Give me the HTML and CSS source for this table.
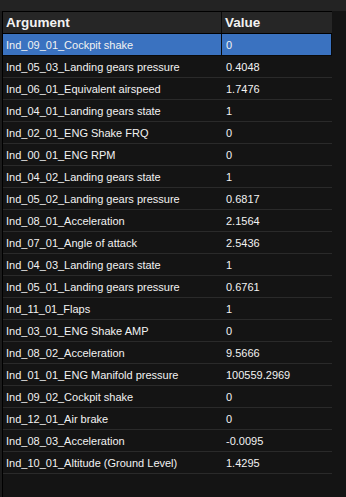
FILE: index.html
```html
<!DOCTYPE html>
<html>
<head>
<meta charset="utf-8">
<link rel="stylesheet" href="styles.css">
</head>
<body>
<div class="top"></div>
<div class="frame">
  <div class="side"></div>
  <div class="grid">
    <div class="row head"><div class="c1">Argument</div><div class="c2">Value</div></div>
    <div class="row sel"><div class="c1">Ind_09_01_Cockpit shake</div><div class="c2">0</div></div>
    <div class="row"><div class="c1">Ind_05_03_Landing gears pressure</div><div class="c2">0.4048</div></div>
    <div class="row"><div class="c1">Ind_06_01_Equivalent airspeed</div><div class="c2">1.7476</div></div>
    <div class="row"><div class="c1">Ind_04_01_Landing gears state</div><div class="c2">1</div></div>
    <div class="row"><div class="c1">Ind_02_01_ENG Shake FRQ</div><div class="c2">0</div></div>
    <div class="row"><div class="c1">Ind_00_01_ENG RPM</div><div class="c2">0</div></div>
    <div class="row"><div class="c1">Ind_04_02_Landing gears state</div><div class="c2">1</div></div>
    <div class="row"><div class="c1">Ind_05_02_Landing gears pressure</div><div class="c2">0.6817</div></div>
    <div class="row"><div class="c1">Ind_08_01_Acceleration</div><div class="c2">2.1564</div></div>
    <div class="row"><div class="c1">Ind_07_01_Angle of attack</div><div class="c2">2.5436</div></div>
    <div class="row"><div class="c1">Ind_04_03_Landing gears state</div><div class="c2">1</div></div>
    <div class="row"><div class="c1">Ind_05_01_Landing gears pressure</div><div class="c2">0.6761</div></div>
    <div class="row"><div class="c1">Ind_11_01_Flaps</div><div class="c2">1</div></div>
    <div class="row"><div class="c1">Ind_03_01_ENG Shake AMP</div><div class="c2">0</div></div>
    <div class="row"><div class="c1">Ind_08_02_Acceleration</div><div class="c2">9.5666</div></div>
    <div class="row"><div class="c1">Ind_01_01_ENG Manifold pressure</div><div class="c2">100559.2969</div></div>
    <div class="row"><div class="c1">Ind_09_02_Cockpit shake</div><div class="c2">0</div></div>
    <div class="row"><div class="c1">Ind_12_01_Air brake</div><div class="c2">0</div></div>
    <div class="row"><div class="c1">Ind_08_03_Acceleration</div><div class="c2">-0.0095</div></div>
    <div class="row"><div class="c1">Ind_10_01_Altitude (Ground Level)</div><div class="c2">1.4295</div></div>
  </div>
</div>
</body>
</html>
```

FILE: styles.css
```css
html, body {
  margin: 0;
  padding: 0;
  background: #141414;
  height: 100%;
  overflow: hidden;
}
body {
  font-family: "Liberation Sans", Arial, sans-serif;
  font-size: 11px;
  color: #f2f2f2;
}
.top {
  height: 11px;
  background: #232323;
}
.frame {
  display: flex;
  height: 486px;
}
.side {
  width: 2px;
  background: #1b1b1b;
  border-right: 1px solid #000;
}
.grid {
  width: 329px;
  border-top: 1px solid #000;
}
.row {
  display: grid;
  grid-template-columns: 219px 110px;
  height: 21px;
  border-bottom: 1px solid #2a2a2a;
  align-items: center;
}
.c1 {
  padding-left: 3px;
  white-space: nowrap;
  overflow: hidden;
}
.c2 {
  padding-left: 4px;
  white-space: nowrap;
}
.head {
  background: #262626;
  border-bottom: 1px solid #000;
  font-weight: bold;
  font-size: 13.5px;
  height: 21px;
}
.head .c1, .head .c2 {
  height: 100%;
  display: flex;
  align-items: center;
}
.head .c1 {
  border-right: 1px solid #0a0a0a;
}
.head .c2 {
  padding-left: 3px;
}
.sel {
  background: #3a72c0;
  border-bottom: 1px solid #0a0a0a;
  border-right: 1px solid #0a0a0a;
}
.sel .c1 {
  height: 100%;
  display: flex;
  align-items: center;
  border-right: 1px solid #0a0a0a;
}
```
